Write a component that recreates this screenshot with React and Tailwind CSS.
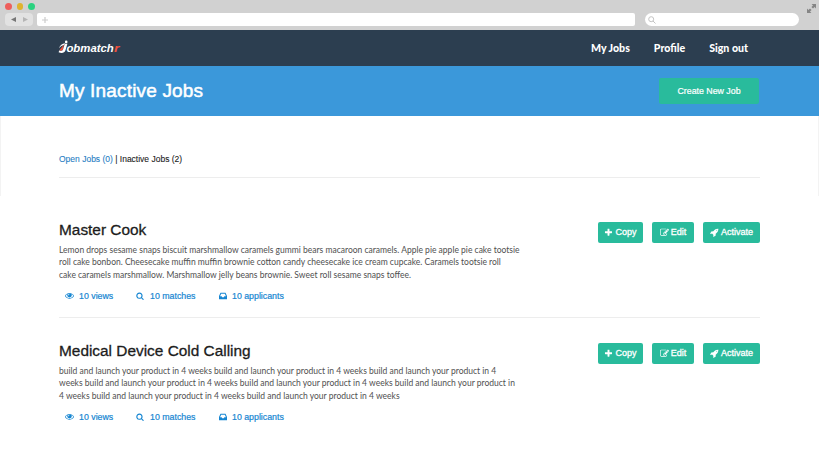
const EYE = "M1664 960q-152-236-381-353 61 104 61 225 0 185-131.5 316.5t-316.5 131.5-316.5-131.5-131.5-316.5q0-121 61-225-229 117-381 353 133 205 333.5 326.5t434.5 121.5 434.5-121.5 333.5-326.5zm-720-384q0-20-14-34t-34-14q-125 0-214.5 89.5t-89.5 214.5q0 20 14 34t34 14 34-14 14-34q0-86 61-147t147-61q20 0 34-14t14-34zm848 384q0 34-20 69-140 230-376.5 368.5t-499.5 138.5-499.5-139-376.5-368q-20-35-20-69t20-69q140-229 376.5-368t499.5-139 499.5 139 376.5 368q20 35 20 69z";
const SEARCH = "M1216 832q0-185-131.5-316.5t-316.5-131.5-316.5 131.5-131.5 316.5 131.5 316.5 316.5 131.5 316.5-131.5 131.5-316.5zm512 832q0 52-38 90t-90 38q-54 0-90-38l-343-342q-179 124-399 124-143 0-273.5-55.5t-225-150-150-225-55.5-273.5 55.5-273.5 150-225 225-150 273.5-55.5 273.5 55.5 225 150 150 225 55.5 273.5q0 220-124 399l343 343q37 37 37 90z";
const INBOX = "M1023 832h316q-1-3-2.5-8t-2.5-8l-212-496h-708l-212 496q-1 2-2.5 8t-2.5 8h316l95 192h320zM1536 862v482q0 26-19 45t-45 19h-1408q-26 0-45-19t-19-45v-482q0-62 25-123l238-552q10-25 36.5-42t52.5-17h832q26 0 52.5 17t36.5 42l238 552q25 61 25 123z";
const PLUS = "M1600 736v192q0 40-28 68t-68 28h-416v416q0 40-28 68t-68 28h-192q-40 0-68-28t-28-68v-416h-416q-40 0-68-28t-28-68v-192q0-40 28-68t68-28h416v-416q0-40 28-68t68-28h192q40 0 68 28t28 68v416h416q40 0 68 28t28 68z";
const EDIT = "M888 1184l116-116-152-152-116 116v56h96v96h56zm440-720q-16-16-33 1l-350 350q-17 17-1 33t33-1l350-350q17-17 1-33zm80 594v190q0 119-84.5 203.5t-203.5 84.5h-832q-119 0-203.5-84.5t-84.5-203.5v-832q0-119 84.5-203.5t203.5-84.5h832q63 0 117 25 15 7 18 23 3 17-9 29l-49 49q-14 14-32 8-23-6-45-6h-832q-66 0-113 47t-47 113v832q0 66 47 113t113 47h832q66 0 113-47t47-113v-126q0-13 9-22l64-64q15-15 35-7t20 29zm-96-738l288 288-672 672h-288v-288zm444 132l-92 92-288-288 92-92q28-28 68-28t68 28l152 152q28 28 28 68t-28 68z";
const ROCKET = "M1440 448q0-40-28-68t-68-28-68 28-28 68 28 68 68 28 68-28 28-68zm224-288q0 249-75.5 430.5t-253.5 360.5q-81 80-195 176l-20 379q-2 16-16 26l-384 224q-7 4-16 4-12 0-23-9l-64-64q-13-14-8-32l85-276-281-281-276 85q-3 1-9 1-14 0-23-9l-64-64q-17-19-5-39l224-384q10-14 26-16l379-20q96-114 176-195 188-187 358-258t431-71q14 0 24 9.5t10 22.5z";

function Icon({ d, box = "0 0 1792 1792", className }) {
  return (
    <svg viewBox={box} fill="currentColor" className={`shrink-0 ${className}`}>
      <path d={d} />
    </svg>
  );
}

function BrowserBar() {
  return (
    <div className="h-[30px] bg-[#d1d1d1]">
      <div className="flex h-[13px] items-center justify-between pl-[5px] pr-[3px]">
        <div className="flex gap-[5px]">
          <span className="size-[6.5px] rounded-full bg-[#ee5f5c]" />
          <span className="size-[6.5px] rounded-full bg-[#dfb32f]" />
          <span className="size-[6.5px] rounded-full bg-[#2bd280]" />
        </div>
        <svg viewBox="0 0 9 9" className="mt-[3px] size-[9px]" fill="#858585">
          <path d="M4.6 0H9v4.4L7.6 3 6 4.6 4.4 3 6 1.4zM0 4.6 1.4 6 3 4.4 4.6 6 3 7.6 4.4 9H0z" />
        </svg>
      </div>
      <div className="flex h-[13px] pl-[5px]">
        <div className="flex h-[13px] w-[28px] items-center justify-center gap-[7px] rounded-sm bg-[#e2e2e2]">
          <svg viewBox="0 0 5 5" className="size-[5px]" fill="#777"><path d="M5 0v5L0 2.5z" /></svg>
          <svg viewBox="0 0 5 5" className="size-[5px]" fill="#b5b5b5"><path d="M0 0v5l5-2.5z" /></svg>
        </div>
        <div className="ml-[4px] flex w-[598px] items-center rounded-xs bg-white pl-[5px]">
          <svg viewBox="0 0 6 6" className="size-[6px]" stroke="#ccc" strokeWidth="1.2"><path d="M3 0v6M0 3h6" /></svg>
        </div>
        <div className="ml-[10px] flex w-[154px] items-center rounded-full bg-white pl-[3px]">
          <svg viewBox="0 0 8 8" className="size-[8px]" fill="none" stroke="#c4c4c4"><circle cx="3.2" cy="3.2" r="2.5" /><path d="M5 5l2.5 2.5" /></svg>
        </div>
      </div>
    </div>
  );
}

function Logo() {
  return (
    <svg viewBox="0 0 64 18" className="h-[18px] w-[64px]">
      <path d="M2 9.2C3 6.4 5 4.8 8.2 4.3L7 6C5 6.4 3.6 7.4 2 9.2z" fill="#fff" />
      <path d="M2.4 11.2 7 5.4 5.8 10.8 4 12z" fill="#f0503c" />
      <path d="M7.8 4.8h2.6L8.5 11.2C7.6 13.8 4.8 14.6 1.6 13.2L2.2 11.6c2 .7 3.4.3 3.9-1.3z" fill="#fff" />
      <circle cx="9.2" cy="2.9" r="1.3" fill="#fff" />
      <text x="9.4" y="12.8" textLength="47.4" lengthAdjust="spacingAndGlyphs" fontSize="11.8" fontWeight="700" fontStyle="italic" className="font-['Liberation_Sans',sans-serif]" fill="#fff">obmatch</text>
      <text x="57" y="12.8" textLength="5.4" lengthAdjust="spacingAndGlyphs" fontSize="11.8" fontWeight="700" fontStyle="italic" className="font-['Liberation_Sans',sans-serif]" fill="#f0503c">r</text>
    </svg>
  );
}

function Action({ d, label, className }) {
  return (
    <button className={`flex h-[21px] items-center justify-center gap-[2px] rounded-[2px] bg-[#29bb9c] text-[9px] leading-[11px] text-white [-webkit-text-stroke:0.3px] ${className}`}>
      <Icon d={d} className="size-[9px]" />
      <span>{label}</span>
    </button>
  );
}

function Job({ title, lines }) {
  return (
    <article className="mb-[22px] h-[99px] border-b border-[#ededed] last:border-b-0">
      <div className="flex justify-between">
        <div>
          <h2 className="h-[21px] text-[15.4px] leading-[21px] whitespace-nowrap text-[#1c1c1c] [-webkit-text-stroke:0.3px]">{title}</h2>
          <div className="mt-[4px] font-[Lato,sans-serif] text-[8.53px] leading-[12.3px] whitespace-nowrap text-[#505050]">
            {lines.map((text) => (
              <p key={text}>{text}</p>
            ))}
          </div>
        </div>
        <div className="flex pt-[3px]">
          <Action d={PLUS} label="Copy" className="w-[45px]" />
          <Action d={EDIT} label="Edit" className="ml-[9px] w-[42px]" />
          <Action d={ROCKET} label="Activate" className="ml-[9px] w-[57px]" />
        </div>
      </div>
      <div className="mt-[9px] flex h-[12px] items-center pl-[6px] text-[8.8px] leading-[12px] whitespace-nowrap text-[#1686d2] [-webkit-text-stroke:0.2px]">
        <Icon d={EYE} className="size-[9px]" />
        <span className="ml-[5px] w-[57px]">10 views</span>
        <Icon d={SEARCH} className="size-[8px]" />
        <span className="ml-[6px] w-[69px]">10 matches</span>
        <Icon d={INBOX} box="0 0 1536 1536" className="size-[8px]" />
        <span className="ml-[5px]">10 applicants</span>
      </div>
    </article>
  );
}

export default function App() {
  return (
    <div className="h-[460px] overflow-hidden bg-white font-['Liberation_Sans',Arial,sans-serif]">
      <BrowserBar />
      <header className="flex h-[36px] items-center justify-between bg-[#2c3e50] pr-[71px] pl-[57px]">
        <Logo />
        <nav className="flex gap-[24px] pt-[1px] font-[Lato,sans-serif] text-[10.6px] font-black text-white">
          <a>My Jobs</a>
          <a>Profile</a>
          <a>Sign out</a>
        </nav>
      </header>
      <div className="flex h-[50px] items-center justify-between bg-[#3b98da] pr-[60px] pl-[59px]">
        <h1 className="pt-[1px] text-[19px] tracking-[0.17px] text-white [-webkit-text-stroke:0.5px]">My Inactive Jobs</h1>
        <button className="h-[26px] w-[100px] rounded-[2px] bg-[#29bb9c] pt-[1px] text-[8.8px] text-white [-webkit-text-stroke:0.2px]">Create New Job</button>
      </div>
      <main>
        <div className="h-[80px] border-x border-[#f3f3f3] px-[58px]">
          <div className="h-[62px] border-b border-[#ededed] pt-[37px] text-[8.5px] leading-[13px] text-[#222] [-webkit-text-stroke:0.1px]">
            <a className="text-[#2980c4]">Open Jobs (0)</a> | Inactive Jobs (2)
          </div>
        </div>
        <div className="px-[59px] pt-[23px]">
          <Job
            title="Master Cook"
            lines={[
              "Lemon drops sesame snaps biscuit marshmallow caramels gummi bears macaroon caramels. Apple pie apple pie cake tootsie",
              "roll cake bonbon. Cheesecake muffin muffin brownie cotton candy cheesecake ice cream cupcake. Caramels tootsie roll",
              "cake caramels marshmallow. Marshmallow jelly beans brownie. Sweet roll sesame snaps toffee.",
            ]}
          />
          <Job
            title="Medical Device Cold Calling"
            lines={[
              "build and launch your product in 4 weeks build and launch your product in 4 weeks build and launch your product in 4",
              "weeks build and launch your product in 4 weeks build and launch your product in 4 weeks build and launch your product in",
              "4 weeks build and launch your product in 4 weeks build and launch your product in 4 weeks",
            ]}
          />
        </div>
      </main>
    </div>
  );
}
